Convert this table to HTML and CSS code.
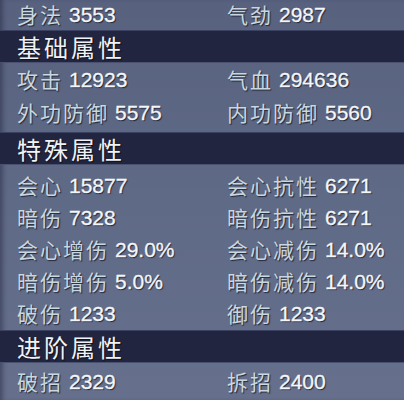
FILE: index.html
```html
<!DOCTYPE html>
<html lang="zh">
<head>
<meta charset="utf-8">
<link rel="stylesheet" href="styles.css">
</head>
<body>
<div class="panel">
  <div class="block b0">
    <div class="row">
      <div class="cell"><span class="k">身法</span><span class="v">3553</span></div>
      <div class="cell"><span class="k">气劲</span><span class="v">2987</span></div>
    </div>
  </div>
  <div class="band">基础属性</div>
  <div class="block b1">
    <div class="row">
      <div class="cell"><span class="k">攻击</span><span class="v">12923</span></div>
      <div class="cell"><span class="k">气血</span><span class="v">294636</span></div>
    </div>
    <div class="row">
      <div class="cell"><span class="k">外功防御</span><span class="v">5575</span></div>
      <div class="cell"><span class="k">内功防御</span><span class="v">5560</span></div>
    </div>
  </div>
  <div class="band">特殊属性</div>
  <div class="block b2">
    <div class="row">
      <div class="cell"><span class="k">会心</span><span class="v">15877</span></div>
      <div class="cell"><span class="k">会心抗性</span><span class="v">6271</span></div>
    </div>
    <div class="row">
      <div class="cell"><span class="k">暗伤</span><span class="v">7328</span></div>
      <div class="cell"><span class="k">暗伤抗性</span><span class="v">6271</span></div>
    </div>
    <div class="row">
      <div class="cell"><span class="k">会心增伤</span><span class="v">29.0%</span></div>
      <div class="cell"><span class="k">会心减伤</span><span class="v">14.0%</span></div>
    </div>
    <div class="row">
      <div class="cell"><span class="k">暗伤增伤</span><span class="v">5.0%</span></div>
      <div class="cell"><span class="k">暗伤减伤</span><span class="v">14.0%</span></div>
    </div>
    <div class="row">
      <div class="cell"><span class="k">破伤</span><span class="v">1233</span></div>
      <div class="cell"><span class="k">御伤</span><span class="v">1233</span></div>
    </div>
  </div>
  <div class="band">进阶属性</div>
  <div class="block b3">
    <div class="row">
      <div class="cell"><span class="k">破招</span><span class="v">2329</span></div>
      <div class="cell"><span class="k">拆招</span><span class="v">2400</span></div>
    </div>
  </div>
</div>
</body>
</html>
```

FILE: styles.css
```css
html, body {
  margin: 0;
  padding: 0;
  width: 404px;
  height: 400px;
  overflow: hidden;
  background: #5e6884;
}

.panel {
  width: 404px;
  height: 400px;
  display: flex;
  flex-direction: column;
  background: linear-gradient(180deg, #58627f 0%, #5f6a87 50%, #66708c 100%);
  box-shadow: inset 5px 0 4px -2px rgba(30, 34, 60, 0.45);
}

.block {
  display: flex;
  flex-direction: column;
}

.b0 { height: 33px; margin-top: -3px; box-sizing: border-box; border-top: 1px solid rgba(150,160,185,0.35); }
.b1 { height: 69px; padding-bottom: 3px; box-sizing: border-box; }
.b2 { height: 165px; padding-top: 4px; box-sizing: border-box; }
.b3 { padding-top: 2px; }

.b1 .row { height: 33px; }

.row {
  display: flex;
  height: 32px;
  align-items: center;
}

.cell {
  display: flex;
  align-items: center;
  box-sizing: border-box;
}

.cell:first-child {
  width: 227px;
  padding-left: 17px;
}

.k {
  font-family: "Noto Sans CJK SC", sans-serif;
  font-size: 21px;
  letter-spacing: 2px;
  color: #c9d7df;
  text-shadow: 1px 1px 1px rgba(20, 24, 40, 0.8);
  line-height: 1;
}

.v {
  font-family: "Liberation Sans", Arial, sans-serif;
  font-size: 21px;
  color: #f4f6f8;
  margin-left: 6px;
  text-shadow: 1px 1px 1px rgba(20, 24, 40, 0.85);
  line-height: 1;
  -webkit-text-stroke: 0.3px #f4f6f8;
}

.band {
  height: 33px;
  box-sizing: border-box;
  background: #21253f;
  border-top: 1px solid #3b4160;
  border-bottom: 1px solid #4a5170;
  display: flex;
  align-items: center;
  padding-left: 17px;
  font-family: "Noto Sans CJK SC", sans-serif;
  font-size: 24px;
  letter-spacing: 3px;
  color: #f1f2f4;
  text-shadow: 1px 1px 1px rgba(0, 0, 0, 0.6);
}
```
